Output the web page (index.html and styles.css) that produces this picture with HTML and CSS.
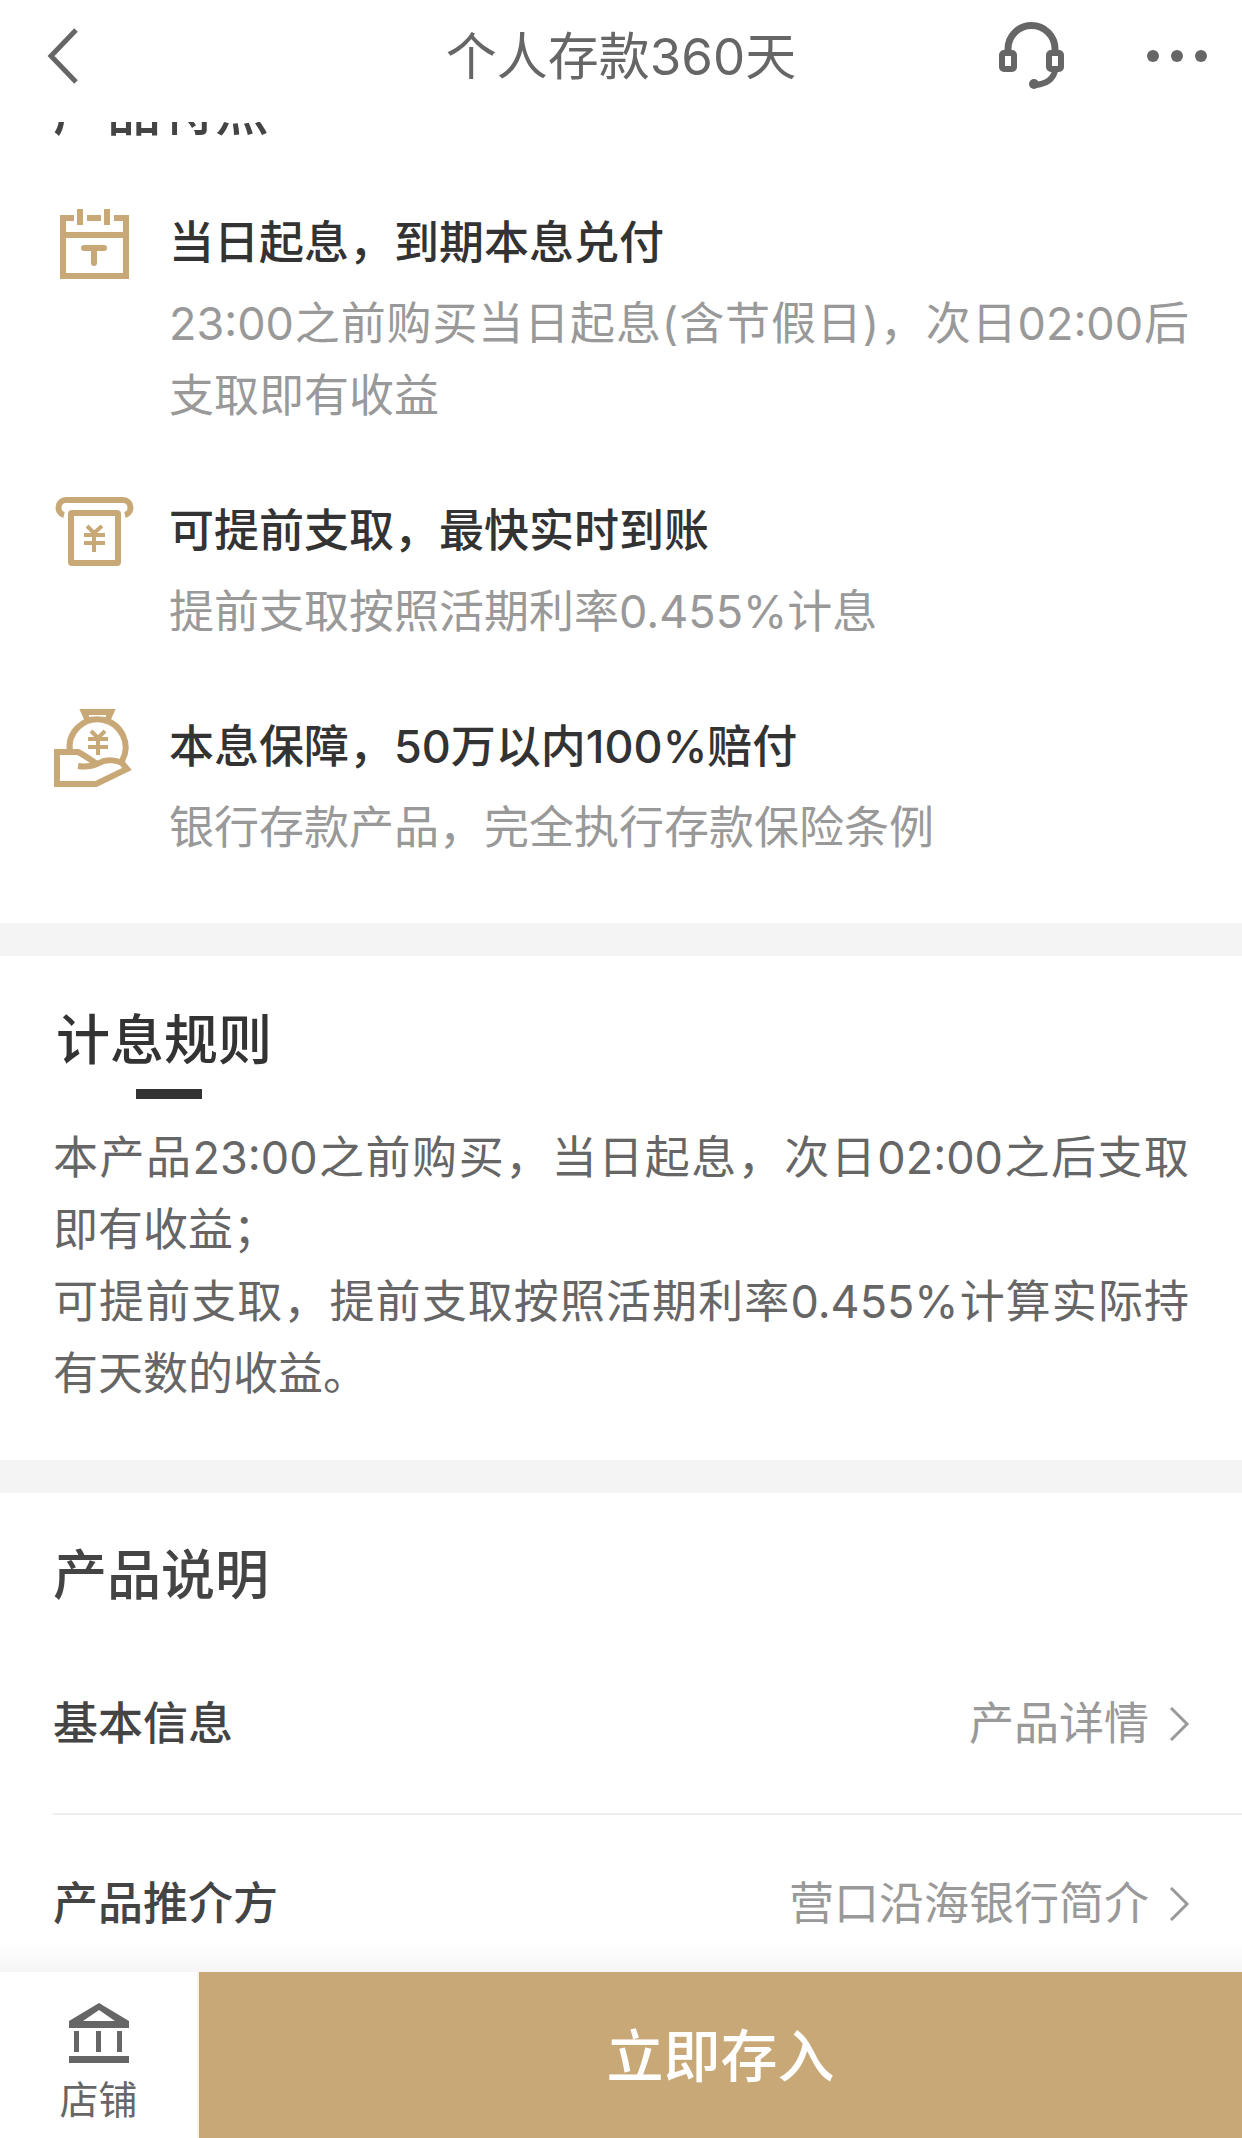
FILE: index.html
```html
<!DOCTYPE html>
<html lang="zh-CN">
<head>
    <meta charset="UTF-8">
    <meta name="viewport" content="width=device-width, initial-scale=1.0">
    <title>个人存款360天</title>
    <link rel="stylesheet" href="styles.css">
</head>
<body>
    <!-- 顶部导航 -->
    <header class="navbar">
        <div class="nav-side">
            <button class="icon-btn back" type="button" aria-label="返回">
                <svg width="36" height="60" viewBox="0 0 36 60"><path d="M32 4L7 30L32 56" fill="none" stroke="#666" stroke-width="5"/></svg>
            </button>
        </div>
        <h1 class="nav-title">个人存款360天</h1>
        <div class="nav-side nav-right">
            <button class="icon-btn" type="button" aria-label="客服">
                <svg width="68" height="68" viewBox="0 0 68 68" fill="none" stroke="#666">
                    <path d="M10 30V27a23 23 0 0 1 47 0v3" stroke-width="7"/>
                    <rect x="4" y="31" width="12" height="16" rx="2" stroke-width="6"/>
                    <rect x="51" y="31" width="12" height="16" rx="2" stroke-width="6"/>
                    <path d="M57 49c-2 8-9 13-20 14" stroke-width="6"/>
                    <circle cx="36" cy="62" r="5" fill="#666" stroke="none"/>
                </svg>
            </button>
            <button class="icon-btn" type="button" aria-label="更多">
                <svg width="62" height="16" viewBox="0 0 62 16" fill="#666"><circle cx="7" cy="8" r="6"/><circle cx="31" cy="8" r="6"/><circle cx="55" cy="8" r="6"/></svg>
            </button>
        </div>
    </header>

    <main class="content">
        <!-- 产品特点 -->
        <section class="section features">
            <h2 class="section-title">产品特点</h2>
            <div class="feature">
                <svg class="feature-icon" width="82" height="82" viewBox="0 0 82 82" fill="none" stroke="#c8a876" stroke-width="6">
                    <path d="M21 9H10V67H73V9H61M34 9H48M10 26H73"/>
                    <path d="M27 0V16M54 0V16"/>
                    <path d="M31 39H51M41 39V54" stroke-linecap="round"/>
                </svg>
                <div class="feature-text">
                    <h3>当日起息，到期本息兑付</h3>
                    <p>23:00之前购买当日起息(含节假日)，次日02:00后支取即有收益</p>
                </div>
            </div>
            <div class="feature">
                <svg class="feature-icon" width="82" height="82" viewBox="0 0 82 82" fill="none" stroke="#c8a876" stroke-width="6">
                    <path d="M11 18C3 16 4 3 13 3H70C79 3 80 16 72 18"/>
                    <rect x="18" y="16" width="47" height="50" rx="1"/>
                    <path d="M34 29L41 36L49 29M31 38H52M31 46H52M41 36V55" stroke-width="4"/>
                </svg>
                <div class="feature-text">
                    <h3>可提前支取，最快实时到账</h3>
                    <p>提前支取按照活期利率0.455%计息</p>
                </div>
            </div>
            <div class="feature">
                <svg class="feature-icon" width="82" height="82" viewBox="0 0 82 82" fill="none" stroke="#c8a876" stroke-width="6">
                    <path d="M35 8L31 -1H58L54 8"/>
                    <path d="M17 39A28 28 0 1 1 69 48"/>
                    <path d="M38 18L45 25L52 18M35 26H55M35 34H55M45 25V42" stroke-width="4"/>
                    <path d="M25 53C32 54 39 54 46 50C55 45 65 48 69 50L74 56L43 71H4V39H25C31 42 38 47 44 51"/>
                </svg>
                <div class="feature-text">
                    <h3>本息保障，50万以内100%赔付</h3>
                    <p>银行存款产品，完全执行存款保险条例</p>
                </div>
            </div>
        </section>

        <!-- 计息规则 -->
        <section class="section rules">
            <h2 class="section-title underlined">计息规则</h2>
            <p>本产品23:00之前购买，当日起息，次日02:00之后支取即有收益；</p>
            <p>可提前支取，提前支取按照活期利率0.455%计算实际持有天数的收益。</p>
        </section>

        <!-- 产品说明 -->
        <section class="section info">
            <h2 class="section-title">产品说明</h2>
            <a class="info-row" href="#">
                <span class="info-label">基本信息</span>
                <span class="info-value">产品详情</span>
                <svg width="20" height="36" viewBox="0 0 20 36"><path d="M2 2L18 18L2 34" fill="none" stroke="#999" stroke-width="3"/></svg>
            </a>
            <a class="info-row" href="#">
                <span class="info-label">产品推介方</span>
                <span class="info-value">营口沿海银行简介</span>
                <svg width="20" height="36" viewBox="0 0 20 36"><path d="M2 2L18 18L2 34" fill="none" stroke="#999" stroke-width="3"/></svg>
            </a>
        </section>
    </main>

    <!-- 底部操作栏 -->
    <footer class="bottom-bar">
        <a class="shop" href="#">
            <svg width="60" height="60" viewBox="0 0 60 60" fill="#666">
                <path fill-rule="evenodd" d="M0 18L30 0L60 18V25H0ZM14 18H46L30 7Z"/>
                <path d="M5 28H10V49H5ZM27 28H32V49H27ZM48 28H53V49H48ZM0 53H60V60H0Z"/>
            </svg>
            <span>店铺</span>
        </a>
        <button class="buy" type="button">立即存入</button>
    </footer>
</body>
</html>
```

FILE: styles.css
```css
* {
    box-sizing: border-box;
    margin: 0;
    padding: 0;
}
body {
    display: flex;
    flex-direction: column;
    height: 100vh;
    overflow: hidden;
    background-color: #fff;
    color: #333;
    font-family: Inter, "Noto Sans CJK SC", sans-serif;
    font-size: 45px;
    line-height: 72px;
}
a {
    color: inherit;
    text-decoration: none;
}
button {
    border: none;
    background: none;
    font-family: inherit;
}
svg {
    display: block;
    flex: none;
    overflow: visible;
}

/* 顶部导航 */
.navbar {
    display: flex;
    align-items: center;
    flex: none;
    height: 122px;
    padding: 0 34px 10px;
}
.nav-side {
    display: flex;
    flex: 1;
}
.nav-right {
    justify-content: flex-end;
    align-items: center;
    gap: 80px;
}
.back {
    margin-left: 10px;
}
.nav-title {
    padding-top: 2px;
    color: #666;
    font-size: 51px;
    font-weight: 400;
}

/* 内容区 */
.content {
    flex: 1;
    min-height: 0;
    overflow: hidden;
}
.section {
    padding: 0 53px;
    border-bottom: 33px solid #f4f4f4;
}
.section-title {
    font-size: 54px;
    font-weight: 500;
}
.features {
    padding-bottom: 59px;
}
.features .section-title {
    margin-top: -46px;
    margin-bottom: 59px;
    color: #444;
}
.feature {
    display: flex;
    gap: 34px;
}
.feature + .feature {
    margin-top: 63px;
}
.feature-icon {
    margin-top: 2px;
}
.feature-text {
    flex: 1;
}
.feature h3 {
    margin-bottom: 9px;
    font-size: 45px;
    font-weight: 500;
}
.feature p {
    color: #999;
    text-align: justify;
}
.rules {
    padding-top: 49px;
    padding-bottom: 50px;
    color: #666;
    text-align: justify;
}
.underlined {
    width: fit-content;
    margin-bottom: 23px;
    padding-left: 3px;
    color: #333;
}
.underlined::after {
    content: "";
    display: block;
    width: 66px;
    height: 10px;
    margin: 12px 0 0 80px;
    background-color: #333;
}
.info {
    padding-top: 47px;
    padding-right: 0;
    border-bottom: none;
}
.info .section-title {
    margin-bottom: 23px;
    color: #444;
}
.info-row {
    display: flex;
    align-items: center;
    height: 180px;
    padding-right: 53px;
    border-bottom: 2px solid #eee;
}
.info-label {
    flex: 1;
    color: #444;
    font-weight: 500;
}
.info-value {
    margin-right: 20px;
    color: #999;
}

/* 底部操作栏 */
.bottom-bar {
    position: relative;
    display: flex;
    flex: none;
    height: 166px;
    background-color: #fff;
}
.bottom-bar::before {
    content: "";
    position: absolute;
    right: 0;
    bottom: 100%;
    left: 0;
    height: 30px;
    background: linear-gradient(rgba(0, 0, 0, 0), rgba(0, 0, 0, 0.04));
}
.shop {
    display: flex;
    flex-direction: column;
    align-items: center;
    gap: 1px;
    width: 199px;
    padding-top: 31px;
    border-right: 2px solid #f8f2e9;
    color: #666;
    font-size: 39px;
}
.buy {
    flex: 1;
    padding-bottom: 6px;
    background-color: #c8a876;
    color: #fff;
    font-size: 57px;
    font-weight: 500;
}
```
